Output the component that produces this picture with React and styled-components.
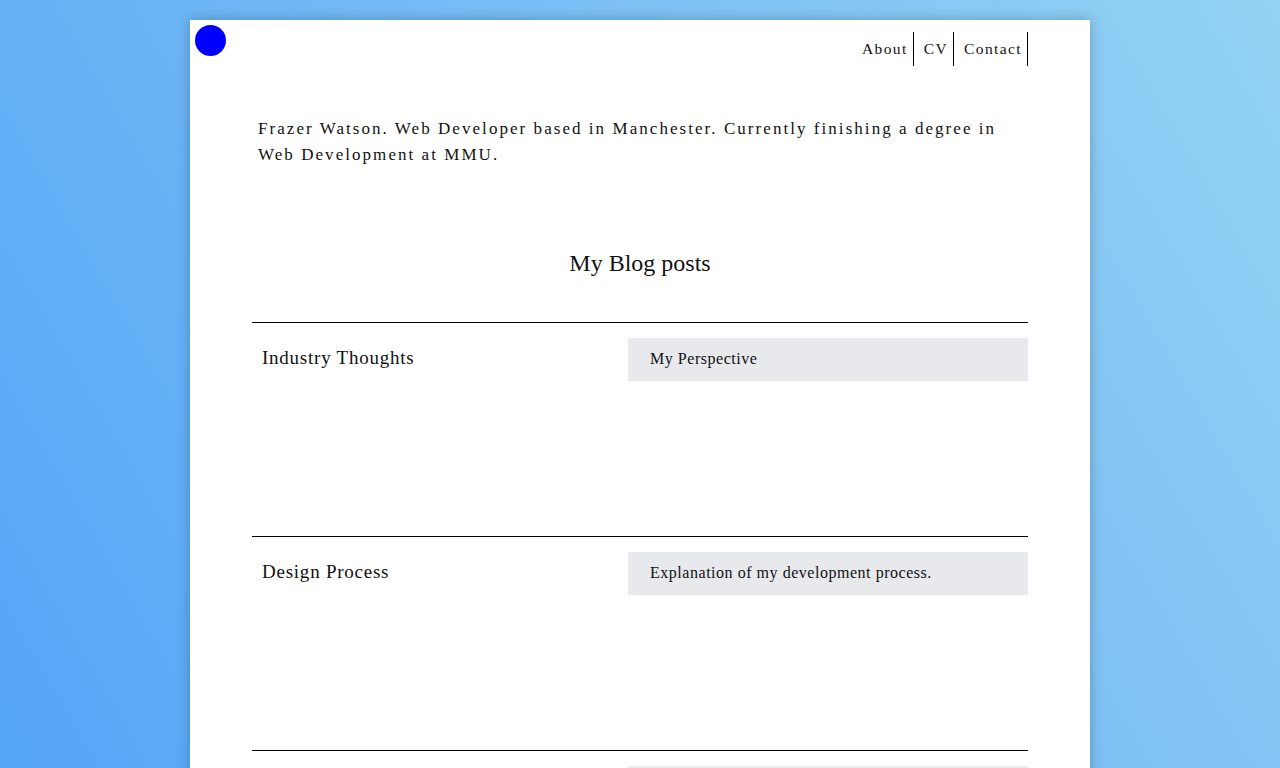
import React from 'react'
import styled, { createGlobalStyle } from 'styled-components'

const GlobalStyle = createGlobalStyle`
    html, body {
        margin: 0;
        padding: 0;
    }

    body {
        min-height: 768px;
        background: linear-gradient(60deg, #55a5f7 0%, #78bdf5 55%, #93d2f4 100%);
        background-attachment: fixed;
        font-family: "Liberation Serif", "DejaVu Serif", serif;
        color: #111;
        overflow: hidden;
    }
`

const Page = styled.div`
    width: 900px;
    margin: 20px auto 0;
    min-height: 800px;
    background-color: #fff;
    box-shadow: 0 0 12px rgba(0, 0, 0, 0.25);
`

const Header = styled.header`
    display: flex;
    justify-content: space-between;
    align-items: flex-start;
    padding: 5px 62px 0 5px;
`

const Logo = styled.div`
    width: 31px;
    height: 31px;
    border-radius: 50%;
    background-color: #0000ff;
`

const Nav = styled.ul`
    list-style: none;
    display: flex;
    margin: 7px 0 0;
    padding: 0;

    li{
        display: flex;
        align-items: center;
        height: 34px;
        padding: 0 5px 0 10px;
        border-right: 1px solid #000;
        font-size: 15.5px;
        letter-spacing: 0.09em;
    }
`

const Intro = styled.p`
    margin: 50px 62px 0 68px;
    font-size: 17px;
    line-height: 26px;
    letter-spacing: 2.05px;
`

const Heading = styled.h2`
    margin: 82px 0 0;
    text-align: center;
    font-size: 24px;
    font-weight: 400;
`

const PostList = styled.div`
    margin: 45px 62px 0;
`

const Post = styled.div`
    box-sizing: border-box;
    display: flex;
    justify-content: space-between;
    align-items: flex-start;
    height: 214px;
    padding-top: 15px;
    border-top: 1px solid #000;
`

const PostTitle = styled.h3`
    margin: 9px 0 0 10px;
    font-size: 19px;
    font-weight: 400;
    letter-spacing: 0.04em;
`

const PostSummary = styled.div`
    width: 400px;
    height: 43px;
    display: flex;
    align-items: center;
    padding: 0 22px 1px;
    box-sizing: border-box;
    background-color: #e8e9ed;
    font-size: 16px;
    letter-spacing: 0.53px;
`

const posts = [
    { title: 'Industry Thoughts', summary: 'My Perspective' },
    { title: 'Design Process', summary: 'Explanation of my development process.' },
    { title: 'Learning Journey', summary: 'Notes from my degree.' },
]

const App = () => {
    return (
        <>
            <GlobalStyle />
            <Page>
                <Header>
                    <Logo />
                    <Nav>
                        <li>About</li>
                        <li>CV</li>
                        <li>Contact</li>
                    </Nav>
                </Header>

                <Intro>
                    Frazer Watson. Web Developer based in Manchester. Currently finishing a degree in Web Development at MMU.
                </Intro>

                <Heading>My Blog posts</Heading>

                <PostList>
                    {posts.map((post, index) => (
                        <Post key={index}>
                            <PostTitle>{post.title}</PostTitle>
                            <PostSummary>{post.summary}</PostSummary>
                        </Post>
                    ))}
                </PostList>
            </Page>
        </>
    )
}

export default App
